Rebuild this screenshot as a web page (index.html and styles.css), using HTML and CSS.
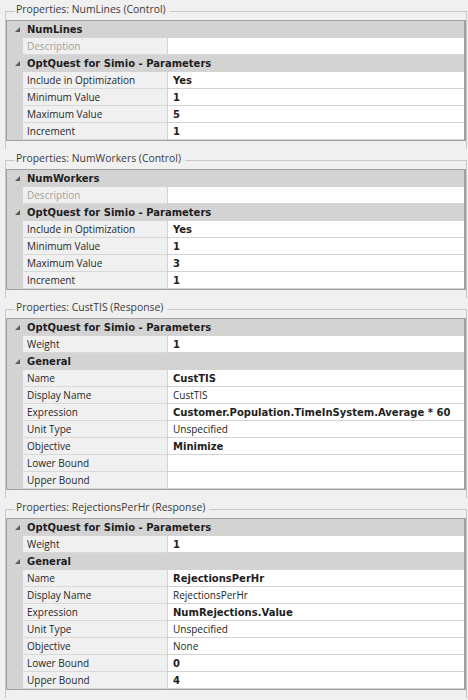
FILE: index.html
```html
<!DOCTYPE html>
<html>
<head>
<meta charset="utf-8">
<link rel="stylesheet" href="styles.css">
</head>
<body>
<div class="panel">

  <section class="group">
    <div class="group-head"><span class="group-title">Properties: NumLines (Control)</span></div>
    <div class="group-body">
      <div class="grid">
        <div class="cat"><svg class="tri" viewBox="0 0 5 5"><polygon points="5,0 5,5 0,5"/></svg>NumLines</div>
        <div class="row"><div class="name dim">Description</div><div class="val"></div></div>
        <div class="cat"><svg class="tri" viewBox="0 0 5 5"><polygon points="5,0 5,5 0,5"/></svg>OptQuest for Simio - Parameters</div>
        <div class="row"><div class="name">Include in Optimization</div><div class="val b">Yes</div></div>
        <div class="row"><div class="name">Minimum Value</div><div class="val b">1</div></div>
        <div class="row"><div class="name">Maximum Value</div><div class="val b">5</div></div>
        <div class="row"><div class="name">Increment</div><div class="val b">1</div></div>
      </div>
    </div>
  </section>

  <section class="group">
    <div class="group-head"><span class="group-title">Properties: NumWorkers (Control)</span></div>
    <div class="group-body">
      <div class="grid">
        <div class="cat"><svg class="tri" viewBox="0 0 5 5"><polygon points="5,0 5,5 0,5"/></svg>NumWorkers</div>
        <div class="row"><div class="name dim">Description</div><div class="val"></div></div>
        <div class="cat"><svg class="tri" viewBox="0 0 5 5"><polygon points="5,0 5,5 0,5"/></svg>OptQuest for Simio - Parameters</div>
        <div class="row"><div class="name">Include in Optimization</div><div class="val b">Yes</div></div>
        <div class="row"><div class="name">Minimum Value</div><div class="val b">1</div></div>
        <div class="row"><div class="name">Maximum Value</div><div class="val b">3</div></div>
        <div class="row"><div class="name">Increment</div><div class="val b">1</div></div>
      </div>
    </div>
  </section>

  <section class="group">
    <div class="group-head"><span class="group-title">Properties: CustTIS (Response)</span></div>
    <div class="group-body">
      <div class="grid">
        <div class="cat"><svg class="tri" viewBox="0 0 5 5"><polygon points="5,0 5,5 0,5"/></svg>OptQuest for Simio - Parameters</div>
        <div class="row"><div class="name">Weight</div><div class="val b">1</div></div>
        <div class="cat"><svg class="tri" viewBox="0 0 5 5"><polygon points="5,0 5,5 0,5"/></svg>General</div>
        <div class="row"><div class="name">Name</div><div class="val b">CustTIS</div></div>
        <div class="row"><div class="name">Display Name</div><div class="val">CustTIS</div></div>
        <div class="row"><div class="name">Expression</div><div class="val b">Customer.Population.TimeInSystem.Average * 60</div></div>
        <div class="row"><div class="name">Unit Type</div><div class="val">Unspecified</div></div>
        <div class="row"><div class="name">Objective</div><div class="val b">Minimize</div></div>
        <div class="row"><div class="name">Lower Bound</div><div class="val"></div></div>
        <div class="row"><div class="name">Upper Bound</div><div class="val"></div></div>
      </div>
    </div>
  </section>

  <section class="group">
    <div class="group-head"><span class="group-title">Properties: RejectionsPerHr (Response)</span></div>
    <div class="group-body">
      <div class="grid">
        <div class="cat"><svg class="tri" viewBox="0 0 5 5"><polygon points="5,0 5,5 0,5"/></svg>OptQuest for Simio - Parameters</div>
        <div class="row"><div class="name">Weight</div><div class="val b">1</div></div>
        <div class="cat"><svg class="tri" viewBox="0 0 5 5"><polygon points="5,0 5,5 0,5"/></svg>General</div>
        <div class="row"><div class="name">Name</div><div class="val b">RejectionsPerHr</div></div>
        <div class="row"><div class="name">Display Name</div><div class="val">RejectionsPerHr</div></div>
        <div class="row"><div class="name">Expression</div><div class="val b">NumRejections.Value</div></div>
        <div class="row"><div class="name">Unit Type</div><div class="val">Unspecified</div></div>
        <div class="row"><div class="name">Objective</div><div class="val">None</div></div>
        <div class="row"><div class="name">Lower Bound</div><div class="val b">0</div></div>
        <div class="row"><div class="name">Upper Bound</div><div class="val b">4</div></div>
      </div>
    </div>
  </section>

</div>
</body>
</html>
```
FILE: styles.css
```css
html, body {
  margin: 0;
  padding: 0;
  background: #f0f0f0;
}
body {
  font-family: "Open Sans", "Liberation Sans", sans-serif;
  font-size: 10px;
  color: #1e1e1e;
  height: 700px;
  overflow: hidden;
}
.panel {
  padding-left: 5px;
  width: 462px;
}
.group-head {
  display: flex;
  height: 20px;
}
.group-head::before,
.group-head::after {
  content: "";
  box-sizing: border-box;
  height: 9px;
  align-self: flex-end;
  border-top: 1px solid #c8c8c8;
}
.group-head::before {
  width: 10px;
  border-left: 1px solid #c8c8c8;
}
.group-head::after {
  flex: 1;
  border-right: 1px solid #c8c8c8;
}
.group-title {
  font-size: 10.4px;
  line-height: 18px;
  padding: 0 4px 0 1px;
  color: #3b3b3b;
  white-space: nowrap;
}
.group-body {
  border-left: 1px solid #c8c8c8;
  border-right: 1px solid #c8c8c8;
  padding-bottom: 8px;
}
.grid {
  border: 1px solid #a0a0a0;
  border-right-width: 2px;
  background: #fff;
}
.cat {
  display: flex;
  align-items: center;
  height: 17px;
  background: #d3d3d3;
  font-family: "DejaVu Sans", sans-serif;
  font-weight: bold;
  font-size: 10px;
  color: #1e1e1e;
  white-space: nowrap;
}
.tri {
  width: 5px;
  height: 5px;
  margin: 0 7px 0 8px;
  fill: #5a5a5a;
  flex: none;
}
.row {
  display: flex;
  height: 17px;
  padding-left: 16px;
  background: #d3d3d3;
}
.name {
  width: 144px;
  box-sizing: border-box;
  background: #f0f0f0;
  border-bottom: 1px solid #d8d8d8;
  padding-left: 4px;
  line-height: 16px;
  white-space: nowrap;
  color: #262626;
}
.name.dim {
  color: #a0a0a0;
}
.val {
  flex: 1;
  min-width: 0;
  background: #fff;
  border-left: 1px solid #d3d3d3;
  border-bottom: 1px solid #d3d3d3;
  padding-left: 5px;
  line-height: 16px;
  white-space: nowrap;
  overflow: hidden;
  color: #1e1e1e;
}
.val.b {
  font-family: "DejaVu Sans", sans-serif;
  font-weight: bold;
  font-size: 10px;
  padding-top: 1px;
  line-height: 15px;
}
```
